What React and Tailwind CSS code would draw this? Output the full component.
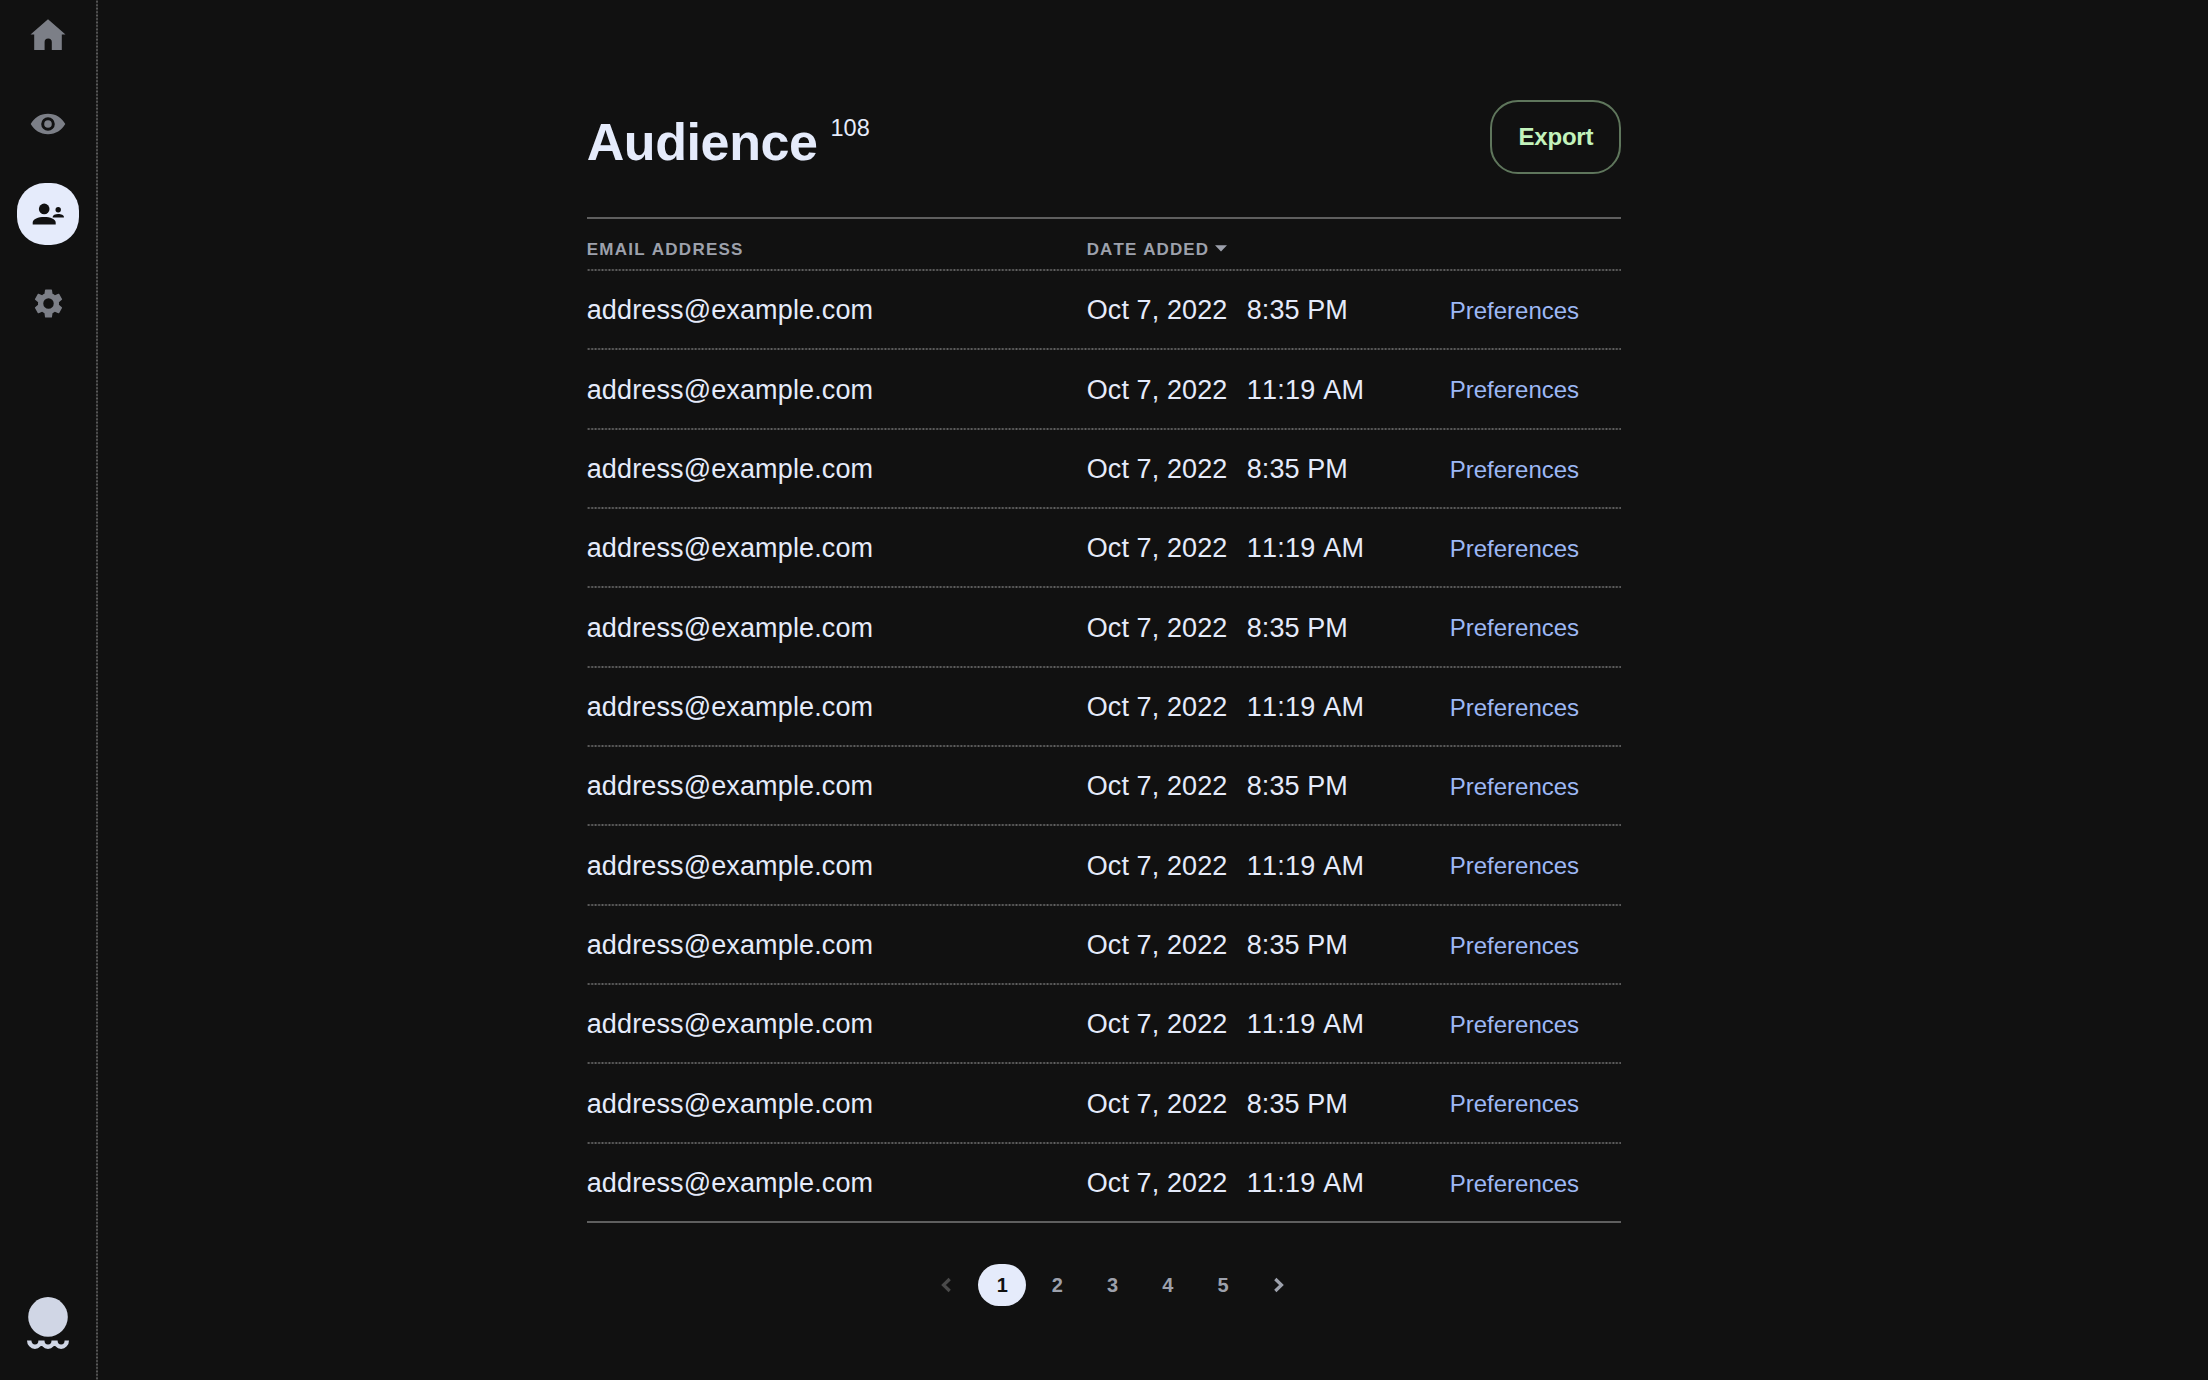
const rows = Array.from({ length: 12 }, (_, i) => ({
  email: 'address@example.com',
  date: 'Oct 7, 2022',
  time: i % 2 === 0 ? '8:35 PM' : '11:19 AM',
}));

const dottedX =
  'bg-[repeating-linear-gradient(90deg,#1a1a1a_0,#626262_1.725px,#1a1a1a_3.45px)]';
const dottedY =
  'bg-[repeating-linear-gradient(180deg,#1a1a1a_0,#5c5c5c_1.725px,#1a1a1a_3.45px)]';

function HomeIcon() {
  return (
    <svg width="36" height="32" viewBox="0 0 36 32" fill="currentColor">
      <path d="M18 .3 35.5 15.6H31.8V31H21.8V23a3.600 3.600 0 0 0-7.200 0V31H4.2V15.6H.5Z" />
    </svg>
  );
}

function EyeIcon() {
  return (
    <svg width="36" height="22" viewBox="0 0 36 22" fill="currentColor">
      <path
        fillRule="evenodd"
        d="M18 .8C26 .8 31.5 4.800 35.300 11 31.500 17.200 26 21.200 18 21.200S4.500 17.200.700 11C4.500 4.800 10 .8 18 .8ZM18 4.200a6.800 6.800 0 1 0 0 13.600 6.800 6.800 0 0 0 0-13.600Z"
      />
      <circle cx="18" cy="11" r="3.800" />
    </svg>
  );
}

function PeopleIcon() {
  return (
    <svg width="32" height="22" viewBox="0 0 32 22" fill="currentColor">
      <circle cx="12.200" cy="5.900" r="5.300" />
      <path d="M.7 21.500V19.600C.700 16 6.200 14 12.200 14S23.700 16 23.700 19.600V21.500Z" />
      <circle cx="26.200" cy="6.800" r="2.700" />
      <path d="M20.700 14.600V13.700C20.700 12 23.200 10.900 26.200 10.900S31.900 12 31.900 13.700V14.600Z" />
    </svg>
  );
}

function GearIcon() {
  return (
    <svg width="35" height="35" viewBox="0 0 24 24" fill="currentColor">
      <path d="M19.140 12.940c.040-.3.060-.610.060-.940 0-.320-.020-.640-.070-.940l2.030-1.580a.490.490 0 0 0 .120-.610l-1.920-3.320a.488.488 0 0 0-.590-.220l-2.390.960c-.5-.380-1.030-.7-1.620-.940l-.360-2.540a.484.484 0 0 0-.480-.410h-3.840c-.240 0-.430.170-.470.410l-.360 2.540c-.590.240-1.130.570-1.620.940l-2.390-.960c-.220-.080-.470 0-.590.220L2.740 8.870c-.120.210-.080.470.120.610l2.030 1.580c-.050.3-.090.630-.090.940s.020.640.070.940l-2.030 1.580a.490.490 0 0 0-.120.610l1.920 3.320c.120.220.370.290.590.220l2.390-.960c.5.380 1.030.7 1.620.940l.360 2.540c.050.240.240.410.480.410h3.840c.240 0 .440-.170.470-.410l.360-2.540c.590-.240 1.130-.560 1.620-.940l2.390.960c.220.080.470 0 .590-.220l1.920-3.320c.120-.220.070-.470-.120-.610l-2.010-1.580zM12 15.600A3.600 3.600 0 1 1 12 8.400a3.600 3.600 0 0 1 0 7.200z" />
    </svg>
  );
}

function Logo() {
  return (
    <svg width="42" height="54" viewBox="0 0 42 54">
      <circle cx="21" cy="19.900" r="19.800" fill="#d0d6e5" />
      <path
        d="M2.200 43.500a5.700 6.200 0 0 0 11.400 0M15.300 43.500a5.700 6.200 0 0 0 11.400 0M28.400 43.500a5.700 6.200 0 0 0 11.400 0"
        fill="none"
        stroke="#d0d6e5"
        strokeWidth="4.400"
      />
    </svg>
  );
}

function Chevron({ className }) {
  return (
    <svg width="12" height="16" viewBox="0 0 12 16" fill="none" className={className}>
      <path d="M2.300 2 8.500 8 2.300 14" stroke="currentColor" strokeWidth="3.200" />
    </svg>
  );
}

function Sidebar() {
  return (
    <nav className="flex h-full w-[98px] shrink-0">
      <div className="flex w-[96px] flex-col items-center pl-[0.9px] text-[#7c7f87]">
        <a className="flex h-[62px] w-[62px] items-center justify-center pt-[8px]"><HomeIcon /></a>
        <a className="mt-[31px] flex h-[62px] w-[62px] items-center justify-center"><EyeIcon /></a>
        <a className="mt-[28px] flex h-[62px] w-[62px] items-center justify-center rounded-[28px] bg-[#e5ebfb] text-[#111]"><PeopleIcon /></a>
        <a className="mt-[27.5px] flex h-[62px] w-[62px] items-center justify-center"><GearIcon /></a>
        <div className="mt-auto pb-[29px]"><Logo /></div>
      </div>
      <div className={`h-full w-[2px] ${dottedY}`} />
    </nav>
  );
}

export default function App() {
  return (
    <div className="flex h-[1380px] w-[2208px] overflow-hidden bg-[#111] font-['Liberation_Sans',Arial,sans-serif] text-[#e5ebfb] [font-kerning:none]">
      <Sidebar />
      <main className="ml-[488.7px] w-[1034.7px]">
        <header className="flex h-[217px] items-start justify-between pt-[100px]">
          <div className="flex items-start">
            <h1 className="mt-[12px] text-[52px] leading-[60px] font-bold tracking-[-0.4px]">Audience</h1>
            <span className="mt-[14px] ml-[13px] text-[23.5px] leading-[28px]">108</span>
          </div>
          <button className="h-[74px] w-[131px] rounded-[28px] border-2 border-[#5f765c] text-[24px] font-bold tracking-[-0.25px] text-[#c3f3bc]">
            Export
          </button>
        </header>

        <div className="h-[2px] bg-[#5f5f5f]" />
        <div className="flex h-[50px] items-center pt-[11px] text-[17px] font-bold tracking-[1.25px] text-[#9da1ac]">
          <div className="w-[499.5px]">EMAIL ADDRESS</div>
          <div className="flex items-center gap-[6px] pl-[0.5px]">
            <span className="tracking-[1.1px]">DATE ADDED</span>
            <svg width="12" height="7" viewBox="0 0 12 7" fill="currentColor" className="-mt-[3px]">
              <path d="M0 .2H12L6 6.400Z" />
            </svg>
          </div>
        </div>
        <div className={`h-[2px] ${dottedX}`} />

        {rows.map((row, i) => (
          <div key={i} className="flex h-[79.35px] flex-col">
            <div className="flex grow items-center pt-[1.500px] text-[27px]">
              <div className="w-[500px] tracking-[0.130px]">{row.email}</div>
              <div className="w-[160px] tracking-[0.1px]">{row.date}</div>
              <div className={i % 2 === 0 ? 'w-[203px] tracking-[0.1px]' : 'w-[203px] tracking-[0.25px]'}>{row.time}</div>
              <a className="pt-[1px] text-[24px] text-[#9db8f5]">Preferences</a>
            </div>
            <div className={i === rows.length - 1 ? 'h-[2px] bg-[#5f5f5f]' : `h-[2px] ${dottedX}`} />
          </div>
        ))}

        <div className="mt-[41px] flex items-center gap-[6.9px] pl-[336.200px] text-[20px] font-bold text-[#9da1ac]">
          <span className="flex h-[42px] w-[48.3px] items-center justify-center text-[#4a4a4a]"><Chevron className="-ml-[2px] rotate-180" /></span>
          <span className="flex h-[42px] w-[48.3px] items-center justify-center rounded-[21px] bg-[#e5ebfb] text-[#111]">1</span>
          {['2', '3', '4', '5'].map((n) => (
            <span key={n} className="flex h-[42px] w-[48.3px] items-center justify-center">{n}</span>
          ))}
          <span className="flex h-[42px] w-[48.3px] items-center justify-center"><Chevron className="ml-[1px]" /></span>
        </div>
      </main>
    </div>
  );
}
